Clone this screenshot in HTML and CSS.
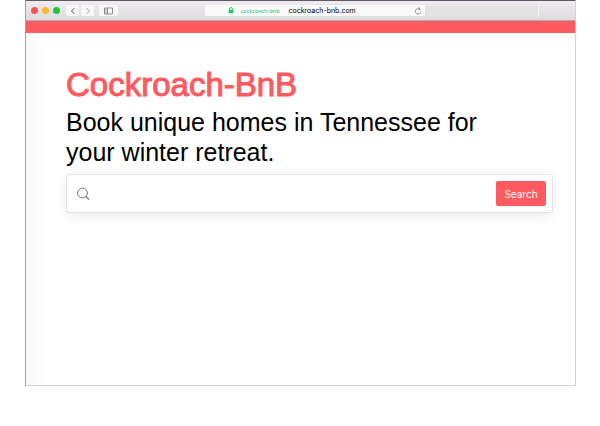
FILE: index.html
```html
<!DOCTYPE html>
<html lang="en">
<head>
<meta charset="utf-8">
<meta name="viewport" content="width=device-width, initial-scale=1">
<title>Cockroach-BnB</title>
<link rel="stylesheet" href="styles.css">
</head>
<body>
<div class="window">
  <header class="toolbar">
    <div class="controls">
      <span class="light light-close"></span>
      <span class="light light-minimize"></span>
      <span class="light light-zoom"></span>
      <button class="tool tool-back" type="button" aria-label="Back">
        <svg width="8" height="8" viewBox="0 0 8 8"><path d="M5.500 1 2.500 4l3 3" fill="none" stroke="#555" stroke-width="1"/></svg>
      </button>
      <button class="tool tool-forward" type="button" aria-label="Forward">
        <svg width="8" height="8" viewBox="0 0 8 8"><path d="m2.500 1 3 3-3 3" fill="none" stroke="#aaa" stroke-width="1"/></svg>
      </button>
      <button class="tool tool-sidebar" type="button" aria-label="Sidebar">
        <svg width="9" height="8" viewBox="0 0 9 8"><path d="M.5 1h8v6h-8zM3.500 1v6M1.300 2.500h1.200M1.300 4h1.200M1.300 5.500h1.200" fill="none" stroke="#777" stroke-width=".8"/></svg>
      </button>
    </div>
    <div class="address">
      <svg class="lock" width="6" height="7" viewBox="0 0 6 7"><path d="M1.500 3V2a1.500 1.500 0 0 1 3 0v1" fill="none" stroke="#1fc46c" stroke-width=".9"/><rect x=".6" y="2.800" width="4.800" height="3.400" rx=".3" fill="#1fc46c"/></svg>
      <span class="site">cockroach-bnb</span>
      <span class="url">cockroach-bnb.com</span>
      <button class="reload" type="button" aria-label="Reload">
        <svg width="8" height="8" viewBox="0 0 8 8"><path d="M6.500 3.200A2.700 2.700 0 1 0 6.700 4.600M4.400.3l1.700 1.500-1.800 1.300" fill="none" stroke="#777" stroke-width=".8"/></svg>
      </button>
    </div>
    <div class="blank"></div>
  </header>
  <div class="band"></div>
  <main class="page">
    <h1 class="brand">Cockroach-BnB</h1>
    <p class="tagline">Book unique homes in Tennessee for your winter retreat.</p>
    <form class="search">
      <label class="search-label" for="query" aria-label="Search homes">
        <svg width="14" height="14" viewBox="0 0 14 14"><circle cx="5.500" cy="6" r="4.900" fill="none" stroke="#777" stroke-width="1"/><path d="m9 9.500 3 3" stroke="#777" stroke-width="1.200"/></svg>
      </label>
      <input class="search-input" id="query" type="text">
      <button class="search-button" type="submit">Search</button>
    </form>
  </main>
</div>
</body>
</html>
```
FILE: styles.css
```css
* {
  box-sizing: border-box;
}

body {
  margin: 0;
  background: #fff;
  font-family: "Liberation Sans", Arial, sans-serif;
  color: #000;
}

button {
  margin: 0;
  padding: 0;
  border: 0;
  font-family: inherit;
}

.window {
  display: flex;
  flex-direction: column;
  min-height: calc(100vh - 40px);
  margin: 0 24px 40px 25px;
  border: 1px solid #d4d4d6;
  border-top-color: #5f5962;
  border-left-color: #a0a0a0;
}

.toolbar {
  display: grid;
  grid-template-columns: 6fr 220px 5fr;
  align-items: center;
  height: 20px;
  background: linear-gradient(#efecf0, #dddbde);
  border-bottom: 1px solid #b3adb0;
}

.controls {
  display: flex;
  align-items: center;
  padding-left: 5px;
}

.light {
  width: 7px;
  height: 7px;
  margin-right: 4px;
  border-radius: 50%;
}

.light-close {
  background: #fc524e;
}

.light-minimize {
  background: #fdbb2d;
}

.light-zoom {
  background: #1fc838;
}

.tool {
  display: flex;
  align-items: center;
  justify-content: center;
  width: 13px;
  height: 11px;
  margin-left: 2px;
  border-radius: 2px;
  background: #f9f8f9;
}

.tool-sidebar {
  width: 19px;
  margin-left: 5px;
}

.address {
  display: flex;
  align-items: center;
  height: 11px;
  padding: 0 3px 0 23px;
  border-radius: 2px;
  background: #fbfafb;
  font-family: Inter, sans-serif;
}

.site {
  margin-left: 6px;
  font-family: Lato, sans-serif;
  font-size: 6px;
  color: #1fc46c;
}

.url {
  margin-left: 9px;
  font-size: 7px;
}

.reload {
  display: flex;
  margin-left: auto;
  background: none;
}

.blank {
  height: 12px;
  margin-right: 36px;
  border-right: 1px solid #f4f3f5;
  border-radius: 2px;
  background: #e5e4e5;
}

.band {
  height: 12px;
  background: #ff5a5f;
}

.page {
  flex: 1;
  padding: 32px 22px 32px 40px;
  background: linear-gradient(90deg, #f8f8f8, #fff 18px);
}

.brand {
  margin: 0;
  font-size: 33px;
  font-weight: 400;
  line-height: 40px;
  color: #ff5a5f;
  -webkit-text-stroke: 1px #ff5a5f;
}

.tagline {
  max-width: 440px;
  margin: 2px 0 7px;
  font-size: 25px;
  line-height: 30px;
}

.search {
  display: flex;
  align-items: center;
  height: 39px;
  padding: 0 6px 0 10px;
  border: 1px solid #e4e4e4;
  border-radius: 3px;
  background: #fff;
  box-shadow: 0 3px 12px rgba(0, 0, 0, 0.08);
}

.search-label {
  display: flex;
}

.search-input {
  flex: 1;
  min-width: 0;
  padding: 4px 8px;
  border: 0;
  outline: 0;
  background: none;
  font-family: inherit;
  font-size: 12px;
}

.search-button {
  width: 50px;
  height: 25px;
  border-radius: 2px;
  background: #ff5a5f;
  font-family: Inter, sans-serif;
  font-size: 10px;
  color: #fff;
}
```
